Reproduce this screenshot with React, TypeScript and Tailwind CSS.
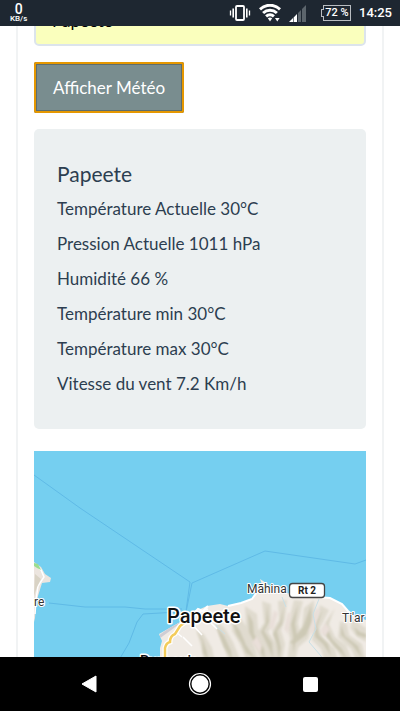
import React from "react";

const readings = [
  "Température Actuelle 30°C",
  "Pression Actuelle 1011 hPa",
  "Humidité 66 %",
  "Température min 30°C",
  "Température max 30°C",
  "Vitesse du vent 7.2 Km/h",
];

function VibrateIcon() {
  return (
    <svg width="22" height="18" viewBox="0 0 22 18" fill="none" stroke="#fff" aria-hidden="true">
      <rect x="7" y="2" width="8" height="14" rx="1" strokeWidth="1.8" />
      <path d="M4.2 4.5v9M17.8 4.5v9" strokeWidth="1.6" />
      <path d="M1.5 6.5v5M20.5 6.5v5" strokeWidth="1.3" />
    </svg>
  );
}

function WifiIcon() {
  return (
    <svg width="22" height="18" viewBox="0 0 22 18" fill="none" aria-hidden="true">
      <g stroke="#fff" strokeWidth="3">
        <path d="M1 5.3C7-.1 15-.1 21 5.3" />
        <path d="M4.1 9c4-3.7 9.8-3.7 13.8 0" />
        <path d="M7.1 12.4c2.3-2.1 5.5-2.1 7.8 0" />
      </g>
      <path d="M8.8 14.2c1.3-1 3.1-1 4.4 0L11 17.5z" fill="#fff" />
      <path d="M16 14h4.6l-2.3 3.4z" fill="#fff" />
    </svg>
  );
}

function SignalIcon() {
  return (
    <svg width="17" height="17" viewBox="0 0 17 17" aria-hidden="true">
      <path d="M0 17l4-4v4zM4.6 12.4L8 9v8H4.6z" fill="#fff" />
      <path d="M9 8l3-3v12H9zM13 4l4-4v17h-4z" fill="#5c656c" />
    </svg>
  );
}

function StatusBar() {
  return (
    <header className="flex h-[26px] shrink-0 items-center bg-[#1e2731] pr-2 pl-2.5 font-['Roboto',sans-serif] text-white">
      <div className="flex flex-col items-center font-medium">
        <span className="text-[14px] leading-3">0</span>
        <span className="text-[8px] leading-2">KB/s</span>
      </div>
      <div className="ml-auto flex items-center">
        <VibrateIcon />
        <span className="ml-2 flex"><WifiIcon /></span>
        <span className="ml-2 flex"><SignalIcon /></span>
        <div className="relative ml-[17px] flex h-4 w-7 items-center justify-center border border-[#b9bdc1] text-[11px] font-medium whitespace-nowrap">
          <span className="absolute top-[3px] -left-[3px] h-2 w-[3px] border border-r-0 border-[#b9bdc1] bg-[#1e2731]" />
          <span className="relative">72 %</span>
        </div>
        <span className="ml-2 text-[13px] font-medium">14:25</span>
      </div>
    </header>
  );
}

function IslandMap() {
  return (
    <svg
      className="mt-[22px] block h-[260px] w-full"
      viewBox="34 451 332 260"
      preserveAspectRatio="xMidYMin slice"
      role="img"
      aria-label="Papeete"
    >
      <defs>
        <clipPath id="land">
          <path d="M160 711V648L162 641 159 634 173 626 186 619 193 614 198 610 207 606 220 604 228 606 241 603 252 599 257 592 264 590 260 579 266 583 272 588 286 593 300 595 317 597 330 598 342 604 348 611 354 616 366 620V711Z" />
        </clipPath>
        <filter id="relief" x="-10%" y="-10%" width="120%" height="120%">
          <feGaussianBlur stdDeviation="0.8" />
        </filter>
      </defs>
      <rect x="34" y="451" width="332" height="260" fill="#75cff0" />
      <g fill="none" stroke="#5fbae6" strokeWidth="1">
        <path d="M34 475L80 508 190 582 186 611" />
        <path d="M186 612L192 583 265 551 355 564 366 560" />
        <path d="M49 603L85 607 125 607 145 609 182 609" />
        <path d="M178 612L143 614 137 622 129 643 119 660" />
      </g>

      <path d="M34 562L41 567 45 574 51 578 50 582 42 583 38 596 36 605 35 618 34 622Z" fill="#ece5df" />
      <path d="M34 564L41 570 44 577 38 586 36 600 35 614" fill="none" stroke="#fff" strokeWidth="1.5" />
      <path d="M35 574l6 5-4 8-3 9z" fill="#d9d3c5" />
      <path d="M34 563l4 1 3 6-4-2-3-2z" fill="#9add91" />

      <g clipPath="url(#land)">
        <rect x="150" y="570" width="220" height="141" fill="#f0ebe5" />
        <g fill="#e0dbcf" filter="url(#relief)">
          <path d="M196 630l8 4 8 14 3 14h-11l-3-16z" />
          <path d="M213 619l11 8 9 15 8 20h-12l-6-17z" />
          <path d="M231 611l10 8 10 14 8 29h-12l-7-18-8-13z" />
          <path d="M245 606l12 8 1 15 11 15 5 18h-13l-6-18-9-16z" />
          <path d="M262 601l9 3 1 22-4 6 9 12 2 18h-12l-3-17-7-12 7-10z" />
          <path d="M278 601l9-1-2 20-4 10 4 14-3 18h-8l3-18-5-14 7-10z" />
          <path d="M294 600l9 1-5 22 3 13-6 26h-8l3-24-3-11z" />
          <path d="M304 608l10-8 1 19-7 20-14 12-4-3 12-21z" />
          <path d="M320 605l9 5-9 18 2 9 13 12 3 13h-13l-4-13-9-9 2-13z" />
          <path d="M335 608l-6 16 6 13 11 8 7 17h-10l-6-12-13-16 1-11z" />
          <path d="M340 621l7 3 2 11 13 9 4 18h-9l-6-13-13-12z" />
          <path d="M352 619l14 9v14l-9-5-7-9z" />
        </g>
        <g fill="#cdc9b5" filter="url(#relief)">
          <path d="M197 631l6 9 4 12 1 8-5-7-1-12z" />
          <path d="M216 626l8 10 7 15 1 9-8-13-4-10z" />
          <path d="M232 620l8 11 6 14 9 13-9-5-5-11-5-8z" />
          <path d="M248 613l5 9 1 12 10 15 1 10-9-13-7-14z" />
          <path d="M267 604l2 18-5 9 8 12 1 15-5-12-7-14 5-9z" />
          <path d="M284 606l-2 18-5 7 4 17-2 12-2-15-4-11 7-12z" />
          <path d="M298 604l-3 20 2 12-4 18 0-18-2-12z" />
          <path d="M311 605l1 17-6 13-12 9-4-1 13-16z" />
          <path d="M323 609l-6 17 2 9 9 9 3 12-8-12-8-7-1-11z" />
          <path d="M332 612l-6 14 6 13 10 10 5 10-13-13-10-13z" />
          <path d="M341 625l4 11 13 10 4 12-10-13-11-10z" />
          <path d="M354 627l6 5 6 2v4l-9-3z" />
        </g>
        <g fill="#e9dfd9" filter="url(#relief)">
          <path d="M274 610l4 3-5 17-4-3zM288 612l3 2-3 20-4-5zM316 608l4 2-7 24-4-2zM330 629l-5 8-5-6 5-8zM257 636l5 9-2 9-8-12z" />
        </g>
        <g fill="none" stroke="#c8dfe6" strokeWidth="1">
          <path d="M214 617l3 10 8 7" />
          <path d="M282 597l4 10" />
          <path d="M319 599l-6 15 3 15-7 13 12 14 7 15" />
        </g>
        <path d="M172 628l22-14 14-5M176 632l6 5M190 622l12 13M183 637l9 9M205 617l12 12" fill="none" stroke="#fff" strokeWidth="1.5" />
        <path d="M159 637l22-16" stroke="#cfcdd4" strokeWidth="3" />
        <path d="M165 711V648q1-5 5-6 0-6 5-8l5-8 11-8" fill="none" stroke="#fff" strokeWidth="5" />
        <path d="M165 711V648q1-5 5-6 0-6 5-8l5-8 11-8" fill="none" stroke="#f3cc5b" strokeWidth="2.5" />
      </g>
      <path d="M193 614L198 609 203 611 208 606M228 606L241 603 252 599 257 592 264 590M300 595L317 597 330 598 342 604 348 611 354 616" fill="none" stroke="#fff" strokeWidth="2" />

      <g className="font-['Roboto',sans-serif]" stroke="#fff" strokeLinejoin="round" paintOrder="stroke">
        <text x="167" y="623" fontSize="20" fontWeight="500" strokeWidth="3" fill="#111">Papeete</text>
        <text x="247" y="593" fontSize="12" strokeWidth="2" fill="#333">Māhina</text>
        <text x="342" y="622" fontSize="12" strokeWidth="2" fill="#333">Ti'ar</text>
        <text x="34" y="606" fontSize="12" strokeWidth="2" fill="#333">re</text>
        <text x="140" y="666" fontSize="14" fontWeight="500" strokeWidth="3" fill="#111">Punaauia</text>
      </g>
      <rect x="289.500" y="583.500" width="35" height="14" rx="3" fill="#fff" stroke="#444" strokeWidth="1.3" />
      <text className="font-['Roboto',sans-serif]" x="307" y="594" textAnchor="middle" fontSize="10" fontWeight="700" fill="#222">Rt 2</text>
    </svg>
  );
}

function NavigationBar() {
  return (
    <nav className="grid h-[54px] shrink-0 grid-cols-3 items-center bg-black px-[34px]">
      <button type="button" aria-label="Retour" className="flex justify-center">
        <svg width="16" height="18" viewBox="0 0 16 18"><path d="M15 1v16L1 9z" fill="#fff" stroke="#fff" strokeLinejoin="round" /></svg>
      </button>
      <button type="button" aria-label="Accueil" className="flex justify-center">
        <svg width="24" height="24" viewBox="0 0 24 24"><circle cx="12" cy="12" r="10.500" fill="none" stroke="#fff" strokeWidth="1.2" /><circle cx="12" cy="12" r="8.500" fill="#fff" /></svg>
      </button>
      <button type="button" aria-label="Applications récentes" className="flex justify-center">
        <span className="size-[15px] rounded-xs bg-white" />
      </button>
    </nav>
  );
}

export default function App() {
  return (
    <div className="flex h-screen flex-col bg-white font-['Lato',sans-serif] text-[#2c3e50]">
      <StatusBar />
      <main className="min-h-0 flex-1 overflow-hidden">
        <section className="mx-4 -mt-7 border-x-2 border-[#f1f3f4] px-4">
          <input
            type="text"
            aria-label="Ville"
            defaultValue="Papeete"
            className="block h-12 w-full rounded-[5px] border-2 border-[#dce4ec] bg-[#faffbd] px-4 pb-1 text-[17px] text-black"
          />
          <button
            type="button"
            className="mt-4 block rounded-xs border-3 border-[#5d6d6e] bg-[#798d8f] px-4 py-3 text-[17px] leading-[21px] text-white outline-2 -outline-offset-2 outline-[#e59700]"
          >
            Afficher Météo
          </button>
          <article className="mt-4 rounded-[5px] bg-[#ecf0f1] px-[23px] pt-8 pb-7">
            <h4 className="text-[21px] leading-[26px]">Papeete</h4>
            <div className="mt-1 text-[17px] leading-[35px]">
              {readings.map((reading) => (
                <p key={reading}>{reading}</p>
              ))}
            </div>
          </article>
          <IslandMap />
        </section>
      </main>
      <NavigationBar />
    </div>
  );
}
